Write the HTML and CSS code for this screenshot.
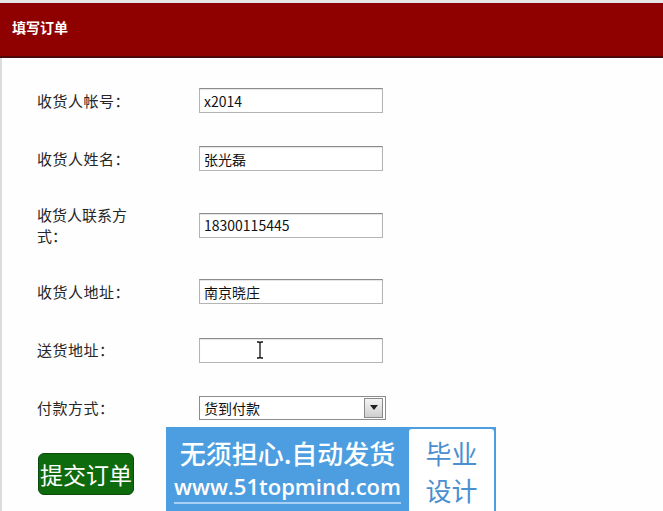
FILE: index.html
```html
<!DOCTYPE html>
<html lang="zh-CN">
<head>
    <meta charset="UTF-8">
    <title>填写订单</title>
    <link rel="stylesheet" href="styles.css">
</head>
<body>
    <div class="top-strip"></div>
    <header class="order-head">填写订单</header>

    <main class="order-page">
        <form class="order-form">
            <div class="form-row">
                <label class="form-label">收货人帐号：</label>
                <input class="form-input" type="text" value="x2014">
            </div>
            <div class="form-row">
                <label class="form-label">收货人姓名：</label>
                <input class="form-input" type="text" value="张光磊">
            </div>
            <div class="form-row form-row-tall">
                <label class="form-label">收货人联系方式：</label>
                <input class="form-input" type="text" value="18300115445">
            </div>
            <div class="form-row">
                <label class="form-label">收货人地址：</label>
                <input class="form-input" type="text" value="南京晓庄">
            </div>
            <div class="form-row">
                <label class="form-label">送货地址：</label>
                <div class="input-wrap">
                    <input class="form-input" type="text" value="">
                    <!-- mouse cursor in the shot -->
                    <svg class="ibeam" width="8" height="18" viewBox="0 0 8 18">
                        <path d="M1 1h2l1 1 1-1h2M4 2v14M1 17h2l1-1 1 1h2" fill="none" stroke="#111" stroke-width="1.3"/>
                    </svg>
                </div>
            </div>
            <div class="form-row">
                <label class="form-label">付款方式：</label>
                <div class="fake-select">
                    <span class="fake-select-text">货到付款</span>
                    <span class="fake-select-btn">
                        <svg width="8" height="5" viewBox="0 0 8 5"><path d="M0 0h8L4 5z" fill="#222"/></svg>
                    </span>
                </div>
            </div>

            <button class="submit-btn" type="button">提交订单</button>
        </form>

        <div class="promo">
            <div class="promo-text">
                <div class="promo-slogan">无须担心.自动发货</div>
                <div class="promo-url">www.51topmind.com</div>
            </div>
            <div class="promo-box">
                <div class="promo-word">毕业</div>
                <div class="promo-word">设计</div>
            </div>
        </div>
    </main>
</body>
</html>
```

FILE: styles.css
```css
:root {
    --head-red: #8f0000;
    --promo-blue: #4d9ee0;
    --text-color: #222;
}

body {
    margin: 0;
    background: #fefefe;
    font-family: "Noto Sans CJK SC", "DejaVu Sans", sans-serif;
    color: var(--text-color);
    overflow: hidden;
}

.top-strip {
    height: 3px;
    background: #e6e6e6;
}

.order-head {
    height: 40px;
    padding: 13px 0 0 12px;
    background: var(--head-red);
    border-bottom: 2px solid #4a0a0a;
    color: #fff;
    font-size: 14px;
    font-weight: bold;
    line-height: 22px;
}

.order-page {
    position: relative;
    height: 460px;
    border-left: 2px solid #dcdcdc;
}

.order-form {
    display: flex;
    flex-direction: column;
    gap: 33px;
    padding: 30px 0 0 35px;
}

.form-row {
    display: flex;
    align-items: center;
}

.form-label {
    width: 100px;
    margin-right: 62px;
    font-size: 15px;
    line-height: 21px;
    letter-spacing: 0.5px;
    color: #262626;
}

.form-row-tall .form-label {
    letter-spacing: 0;
}

.form-input {
    box-sizing: border-box;
    width: 184px;
    height: 25px;
    margin: 0;
    padding: 0 4px;
    border: 1px solid #b4b4b4;
    border-top-color: #8c8c8c;
    background: #fff;
    box-shadow: inset 0 1px 1px #e4e4e4;
    font-family: "Noto Sans CJK SC", "DejaVu Sans", sans-serif;
    font-size: 14px;
    color: #111;
    outline: none;
}

.input-wrap {
    position: relative;
}

.ibeam {
    position: absolute;
    left: 57px;
    top: 4px;
}

.fake-select {
    box-sizing: border-box;
    display: flex;
    align-items: center;
    width: 187px;
    height: 24px;
    border: 1px solid #8c8c8c;
    background: #fff;
}

.fake-select-text {
    flex: 1;
    padding-left: 4px;
    font-size: 14px;
    color: #111;
}

.fake-select-btn {
    display: flex;
    align-items: center;
    justify-content: center;
    width: 17px;
    height: 18px;
    margin-right: 2px;
    border: 1px solid #8a8a8a;
    background: linear-gradient(#f4f4f4, #cfcfcf);
}

.submit-btn {
    align-self: flex-start;
    width: 96px;
    height: 42px;
    margin: 0 0 0 1px;
    padding: 0;
    border: 1px solid #0a4a0a;
    border-radius: 6px;
    background: #0d6a0d;
    color: #fff;
    font-family: "Noto Sans CJK SC", sans-serif;
    font-size: 23px;
    line-height: 40px;
    cursor: pointer;
}

/* watermark banner sitting over the page */
.promo {
    position: absolute;
    left: 164px;
    top: 369px;
    width: 330px;
    height: 86px;
    display: flex;
    align-items: stretch;
    background: var(--promo-blue);
}

.promo-text {
    flex: 1;
    display: flex;
    flex-direction: column;
    align-items: center;
    padding-top: 8px;
    color: #fff;
}

.promo-slogan {
    font-size: 26px;
    line-height: 36px;
    font-weight: 500;
}

.promo-url {
    margin-top: 1px;
    padding-bottom: 1px;
    border-bottom: 2px solid #a9d0f2;
    font-family: "Open Sans", "DejaVu Sans", sans-serif;
    font-size: 22px;
    font-weight: 600;
    line-height: 29px;
}

.promo-box {
    width: 85px;
    margin: 2px 2px 0 0;
    padding-top: 5px;
    border-radius: 3px;
    background: #fff;
    color: #4a8fd0;
    text-align: center;
}

.promo-word {
    font-size: 26px;
    line-height: 37px;
}
```
